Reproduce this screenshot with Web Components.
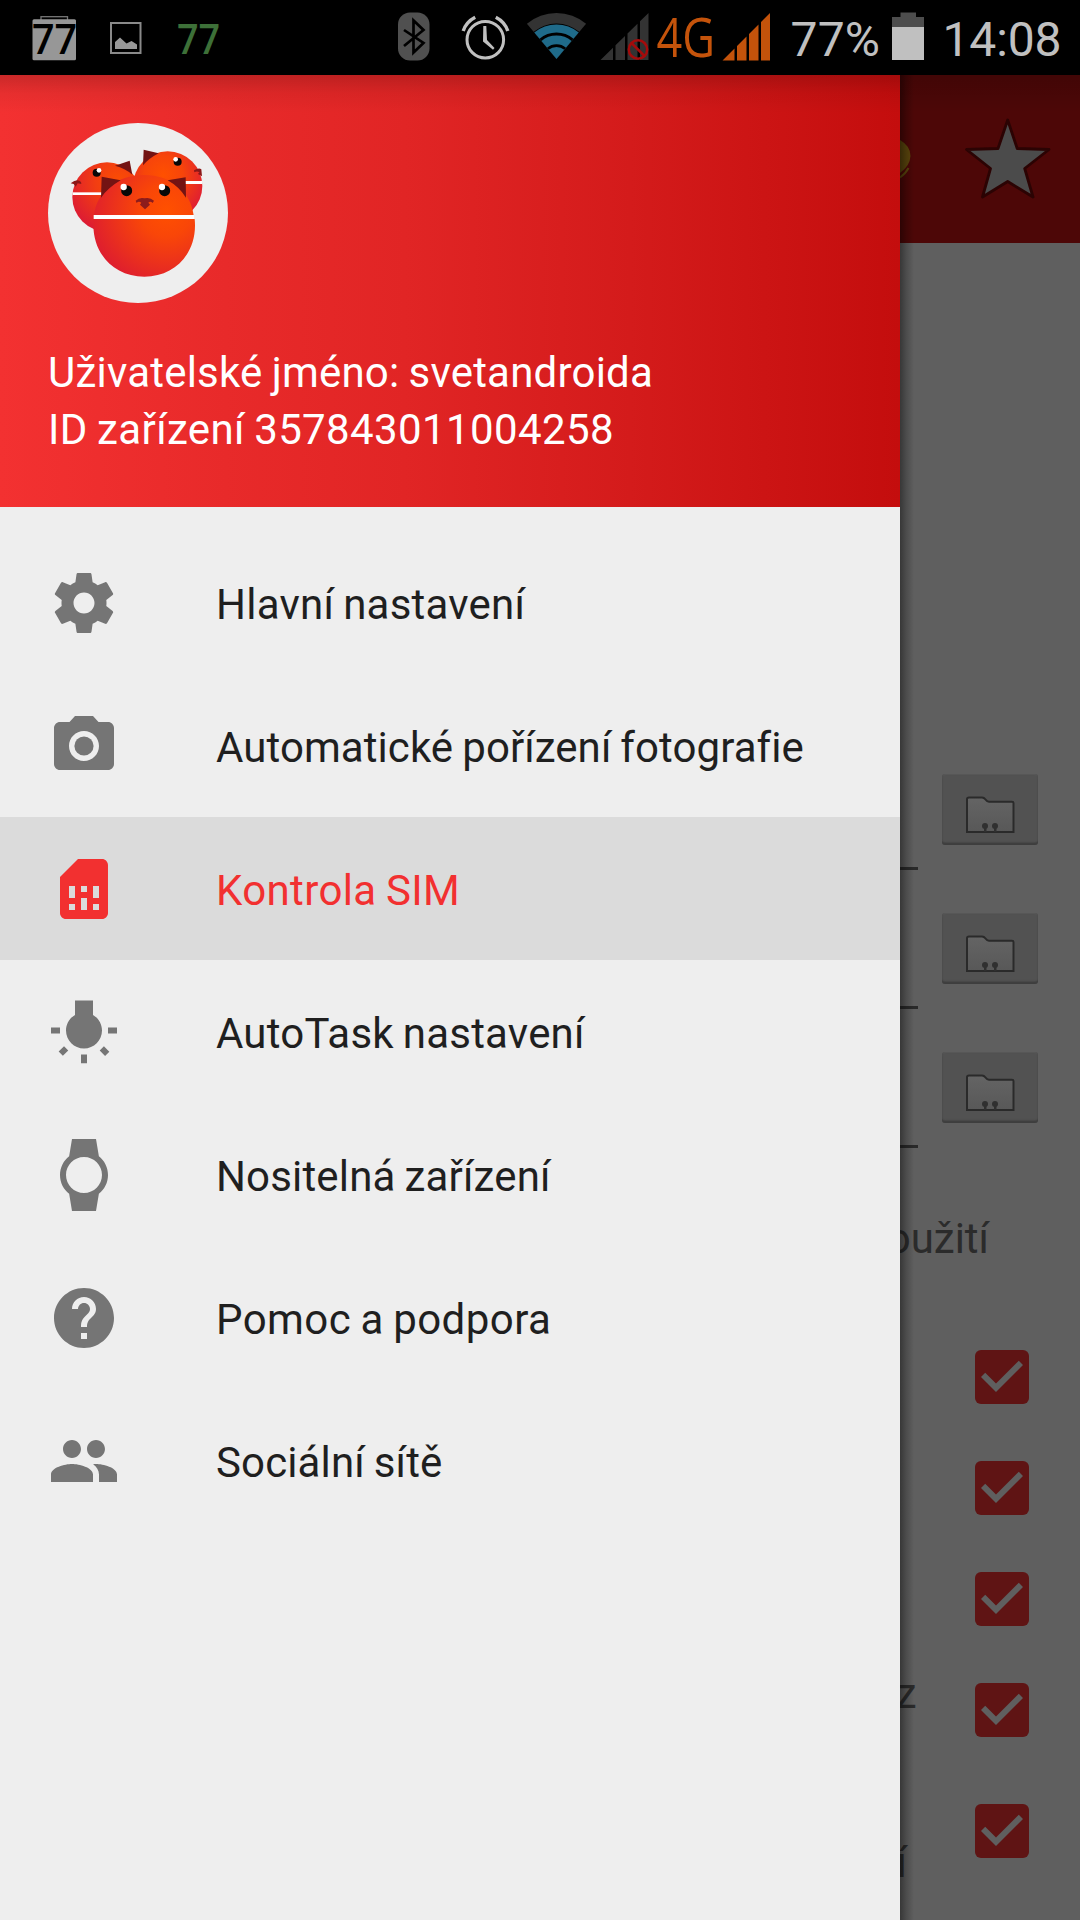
<!DOCTYPE html>
<html lang="cs">
<head>
<meta charset="utf-8">
<title>Kontrola SIM</title>
<style>
html,body{margin:0;background:#000;font-family:Roboto,"Noto Sans",sans-serif}
</style>
</head>
<body>
<app-screen></app-screen>
<script>
const define=(name,markup,after)=>customElements.define(name,class extends HTMLElement{
  constructor(){super();this.attachShadow({mode:'open'});}
  connectedCallback(){
    this.shadowRoot.innerHTML=typeof markup==='function'?markup(this):markup;
    if(after)after(this);
  }
});

/* Text whose last glyph ends at the given distance from its start. */
define('fit-text',`<style>:host{display:block;white-space:nowrap;word-spacing:-1.5px}</style><slot></slot>`,el=>{
  const cs=getComputedStyle(el),c=document.createElement('canvas').getContext('2d');
  c.font=`${cs.fontWeight} ${cs.fontSize} ${cs.fontFamily}`;
  const t=el.textContent,end=+el.getAttribute('end'),spaces=t.split(' ').length-1;
  const ink=c.measureText(t).actualBoundingBoxRight-spaces*1.5;
  el.style.letterSpacing=((end-ink)/(t.length-1)).toFixed(3)+'px';
});

const ICONS={
  settings:'<path d="M19.43 12.98c.04-.32.07-.64.07-.98s-.03-.66-.07-.98l2.11-1.65c.19-.15.24-.42.12-.64l-2-3.46c-.12-.22-.39-.3-.61-.22l-2.49 1c-.52-.4-1.08-.73-1.69-.98l-.38-2.65C14.46 2.18 14.25 2 14 2h-4c-.25 0-.46.18-.49.42l-.38 2.65c-.61.25-1.17.59-1.69.98l-2.49-1c-.23-.09-.49 0-.61.22l-2 3.46c-.13.22-.07.49.12.64l2.11 1.65c-.04.32-.07.65-.07.98s.03.66.07.98l-2.11 1.65c-.19.15-.24.42-.12.64l2 3.46c.12.22.39.3.61.22l2.49-1c.52.4 1.08.73 1.69.98l.38 2.65c.03.24.24.42.49.42h4c.25 0 .46-.18.49-.42l.38-2.65c.61-.25 1.17-.59 1.69-.98l2.49 1c.23.09.49 0 .61-.22l2-3.46c.12-.22.07-.49-.12-.64l-2.11-1.65zM12 15.5c-1.93 0-3.5-1.57-3.5-3.5s1.57-3.5 3.5-3.5 3.5 1.57 3.5 3.5-1.57 3.5-3.5 3.5z"/>',
  camera:'<circle cx="12" cy="12" r="3.2"/><path d="M9 2L7.17 4H4c-1.1 0-2 .9-2 2v12c0 1.1.9 2 2 2h16c1.1 0 2-.9 2-2V6c0-1.1-.9-2-2-2h-3.17L15 2H9zm3 15c-2.76 0-5-2.24-5-5s2.24-5 5-5 5 2.24 5 5-2.24 5-5 5z"/>',
  sim:'<path d="M19.99 4c0-1.1-.89-2-1.99-2h-8L4 8v12c0 1.1.9 2 2 2h12.01c1.1 0 1.99-.9 1.99-2l-.01-16zM9 19H7v-2h2v2zm8 0h-2v-2h2v2zm-8-4H7v-4h2v4zm4 4h-2v-4h2v4zm0-6h-2v-2h2v2zm4 2h-2v-4h2v4z"/>',
  bulb:'<path d="M3.55 18.54l1.41 1.41 1.79-1.8-1.41-1.41-1.79 1.8zM11 22.45h2V19.5h-2v2.95zM4 10.5H1v2h3v-2zm11-4.19V1.5H9v4.81C7.21 7.35 6 9.28 6 11.5c0 3.31 2.69 6 6 6s6-2.69 6-6c0-2.22-1.21-4.15-3-5.19zm5 4.19v2h3v-2h-3zm-2.76 7.66l1.79 1.8 1.41-1.41-1.8-1.79-1.4 1.4z"/>',
  watch:'<path d="M20 12c0-2.54-1.19-4.81-3.04-6.27L16 0H8l-.95 5.73C5.19 7.19 4 9.45 4 12s1.19 4.81 3.05 6.27L8 24h8l.96-5.73C18.81 16.81 20 14.54 20 12zM6 12c0-3.31 2.69-6 6-6s6 2.69 6 6-2.69 6-6 6-6-2.69-6-6z"/>',
  help:'<path d="M12 2C6.48 2 2 6.48 2 12s4.48 10 10 10 10-4.48 10-10S17.52 2 12 2zm1 17h-2v-2h2v2zm2.07-7.75l-.9.92C13.45 12.9 13 13.5 13 15h-2v-.5c0-1.1.45-2.1 1.17-2.83l1.24-1.26c.37-.36.59-.86.59-1.41 0-1.1-.9-2-2-2s-2 .9-2 2H8c0-2.21 1.79-4 4-4s4 1.79 4 4c0 .88-.36 1.68-.93 2.25z"/>',
  people:'<path d="M16 11c1.66 0 2.99-1.34 2.99-3S17.66 5 16 5s-3 1.34-3 3 1.34 3 3 3zm-8 0c1.66 0 2.99-1.34 2.99-3S9.66 5 8 5 5 6.34 5 8s1.34 3 3 3zm0 2c-2.33 0-7 1.17-7 3.5V19h14v-2.5c0-2.33-4.67-3.5-7-3.5zm8 0c-.29 0-.62.02-.97.05 1.16.84 1.97 1.97 1.97 3.45V19h6v-2.5c0-2.33-4.67-3.5-7-3.5z"/>'
};
define('menu-icon',el=>`<style>:host{display:block;width:72px;height:72px}svg{display:block;fill:currentColor}</style>
<svg width="72" height="72" viewBox="0 0 24 24">${ICONS[el.getAttribute('name')]}</svg>`);

define('menu-item',el=>`<style>
:host{display:flex;box-sizing:border-box;height:143px;padding:36px 48px 0;gap:96px;color:#757575}
:host([selected]){background:#dbdbdb;color:#f23030}
fit-text{color:#1f1f1f;font-size:42px;line-height:50px;margin-top:13px}
:host([selected]) fit-text{color:#f23030}
</style><menu-icon name="${el.getAttribute('icon')}"></menu-icon><fit-text end="${el.getAttribute('end')}">${el.getAttribute('label')}</fit-text>`);

define('status-bar',`<style>:host{display:block;height:75px;background:#000}svg{display:block}
text{font-family:Roboto,sans-serif}.w{font-size:48px;fill:#c0c0c0}.c{font-family:"Open Sans","Noto Sans",sans-serif}</style>
<svg width="1080" height="75" viewBox="0 0 1080 75">
<rect x="41" y="16.700" width="26.500" height="4" fill="none" stroke="#777" stroke-width="1.300"/>
<rect x="32.500" y="19.300" width="43.500" height="41" rx="1.500" fill="#979797"/>
<text class="c" x="32" y="53.500" font-size="41" font-weight="600" textLength="45" lengthAdjust="spacingAndGlyphs" fill="#000">77</text>
<rect x="111" y="23" width="29.500" height="30" fill="none" stroke="#8a8a8a" stroke-width="2"/>
<path d="M115 49V42L120 37.500L126.500 43.500L131.500 41L137 44.500V49Z" fill="#999"/>
<text class="c" x="177" y="53.500" font-size="41" font-weight="600" textLength="43" lengthAdjust="spacingAndGlyphs" fill="#3d7038">77</text>
<rect x="398" y="12.500" width="31.500" height="48" rx="12" fill="#505050"/>
<path d="M404 30L423.500 43L413.500 52.500V20.500L423.500 30L404 46" fill="none" stroke="#000" stroke-width="2.700"/>
<g fill="none" stroke="#c0c0c0" stroke-width="3"><circle cx="485.300" cy="39.700" r="18.300"/><path d="M463.200 31Q466 22 475.200 17.200M495.800 17.200Q505 22 507.800 31" stroke-width="3.400"/></g>
<path d="M483.300 26H486.300L487 40L494.500 48L493 49.700L483 41.500Z" fill="#c0c0c0"/>
<path d="M556.500 59L526.900 23.800A46 46 0 0 1 586.100 23.800Z" fill="#333"/><path d="M556.500 59L533.700 31.800A35.500 35.500 0 0 1 579.300 31.800Z" fill="#000"/>
<path d="M556.500 59L534.300 32.600A34.500 34.500 0 0 1 578.700 32.600Z" fill="#1f6b8a"/><path d="M539.500 38.800A26.400 26.400 0 0 1 573.500 38.800L571.600 41A23.500 23.500 0 0 0 541.400 41Z" fill="#000"/><path d="M547 47.700A14.800 14.800 0 0 1 566 47.700L564.300 49.800A12 12 0 0 0 548.700 49.800Z" fill="#000"/>
<path d="M600.500 60L613 47.800V60ZM615.500 60V45.300L625 36V60ZM627.500 60V33.600L637.500 23.800V60ZM640 60V21.300L648.500 13V60Z" fill="#333"/>
<g fill="none" stroke="#a50b0b" stroke-width="2.500"><circle cx="638" cy="49.500" r="9.200"/><path d="M631.500 43L644.500 56"/></g>
<text class="c" x="656.500" y="57" font-size="54" textLength="58.500" lengthAdjust="spacingAndGlyphs" fill="#c4530b">4G</text>
<path d="M722.500 60.500L734.500 48.500V60.500ZM737 60.500V46L746.500 36.500V60.500ZM749 60.500V34L758.500 24.500V60.500ZM761 60.500V22L770 13V60.500Z" fill="#c4530b"/>
<text class="w" x="790.500" y="56" textLength="89.500">77%</text>
<path d="M900.500 12.500H916V17H924V60H892V17H900.500Z" fill="#4d4d4d"/><path d="M892 27H924V60H892Z" fill="#c0c0c0"/>
<text class="w" x="942.500" y="56" textLength="119">14:08</text>
</svg>`);

define('cats-avatar',`<style>:host{display:block;width:180px;height:180px}svg{display:block}</style>
<svg width="180" height="180" viewBox="54 39 540 540"><defs>
<radialGradient id="g" gradientUnits="userSpaceOnUse" cx="410" cy="300" r="265"><stop offset="0" stop-color="#ff5000"/><stop offset=".3" stop-color="#f94608"/><stop offset="1" stop-color="#d91636"/></radialGradient>
<radialGradient id="l" gradientUnits="userSpaceOnUse" cx="262" cy="215" r="165"><stop offset="0" stop-color="#fb4e02"/><stop offset=".4" stop-color="#f23d12"/><stop offset="1" stop-color="#db1936"/></radialGradient>
<radialGradient id="r" gradientUnits="userSpaceOnUse" cx="400" cy="195" r="145"><stop offset="0" stop-color="#ff5000"/><stop offset=".4" stop-color="#f7450a"/><stop offset="1" stop-color="#dc1838"/></radialGradient></defs>
<circle cx="324" cy="309" r="270" fill="#eee"/>
<circle cx="413" cy="228" r="104" fill="url(#r)"/><path d="M440 213H516V222H440Z" fill="#fff"/>
<path d="M341 119L386 130Q358 144 339 166Z" fill="#731313"/><path d="M492 181Q507 172 514 178L516 199L504 192L508 187Q501 182 493 187Z" fill="#8c1717"/>
<circle cx="443" cy="155" r="12" fill="#080808"/><circle cx="437" cy="148" r="7" fill="#fff"/>
<circle cx="231" cy="261" r="104" fill="url(#l)"/><path d="M128 247H220V255H128Z" fill="#fff"/>
<path d="M255 167L299 152L307 194Q285 174 255 167Z" fill="#731313"/><path d="M122 220Q142 204 153 216L154 222L143 220L137 230L131 222Z" fill="#8c1717"/>
<circle cx="200" cy="188" r="12" fill="#080808"/><circle cx="207" cy="181" r="7" fill="#fff"/>
<path d="M192 316C201 245 259 195 342 195C425 195 482 245 491 316ZM191 327H494C504 425 438 500 343 500C248 500 182 425 191 327Z" fill="url(#g)"/>
<path d="M215 200L272 211Q235 232 213 263ZM467 202L413 211Q447 230 468 263Z" fill="#731313"/>
<path d="M191 315H492V327H191Z" fill="#fff"/>
<circle cx="290" cy="242" r="16.500" fill="#080808"/><circle cx="281" cy="231" r="9.500" fill="#fff"/>
<circle cx="404" cy="242" r="16.500" fill="#080808"/><circle cx="396" cy="231" r="9.500" fill="#fff"/>
<path d="M317 272Q328 261 344 265Q360 261 372 272L368 279Q361 272 355 278L360 284L345 298L330 284L334 278Q326 272 320 279Z" fill="#8c1c1c"/>
</svg>`);

define('drawer-header',`<style>:host{display:flex;flex-direction:column;box-sizing:border-box;height:432px;padding:48px 48px 0;color:#fff;font-size:42px;line-height:57px;
background:linear-gradient(rgba(0,0,0,.17),rgba(0,0,0,.05) 18px,transparent 38px),linear-gradient(90deg,#f33131,#e82a2a 25%,#e12525 45%,#d41b1b 70%,#c40d0d)}
.t{margin-top:41px}</style>
<cats-avatar></cats-avatar>
<div class="t"><fit-text end="603">Uživatelské jméno: svetandroida</fit-text><fit-text end="564">ID zařízení 357843011004258</fit-text></div>`);

define('nav-drawer',`<style>:host{display:block;width:900px;background:#eee}nav{padding-top:24px}</style>
<drawer-header></drawer-header>
<nav><menu-item icon="settings" label="Hlavní nastavení" end="310.5"></menu-item>
<menu-item icon="camera" label="Automatické pořízení fotografie" end="585"></menu-item>
<menu-item icon="sim" label="Kontrola SIM" end="241" selected></menu-item>
<menu-item icon="bulb" label="AutoTask nastavení" end="370"></menu-item>
<menu-item icon="watch" label="Nositelná zařízení" end="336"></menu-item>
<menu-item icon="help" label="Pomoc a podpora" end="333"></menu-item>
<menu-item icon="people" label="Sociální sítě" end="225"></menu-item></nav>`);

define('page-toolbar',`<style>:host{display:block;height:168px;background:linear-gradient(rgba(0,0,0,.15),transparent 38px),#4d0707}svg{display:block}</style>
<svg width="180" height="168" viewBox="900 75 180 168">
<path d="M900 140Q910.500 146 910.500 156Q910 166 900 173Z" fill="#5c460c"/><path d="M900 177.500Q906 173 908.500 168" fill="none" stroke="#5c460c" stroke-width="2"/>
<path d="M1007.700 120L1017.200 148.500L1049 149.500L1024.700 168.500L1033 197L1007.700 181.500L982.500 197L990.500 168.500L966.500 149.500L998 148.500Z" fill="#4b4b4b" stroke="#2b0303" stroke-width="2.800" stroke-linejoin="round"/>
</svg>`);

define('folder-row',`<style>:host{display:flex;height:96px;margin-bottom:43px;justify-content:space-between;padding-right:42px}
i{width:18px;height:3px;background:#2a2a2a;align-self:flex-end}
b{display:block;width:96px;height:71px;border-radius:3px;background:#525252;box-shadow:inset 0 -2.500px 1.500px #3e3e3e,inset 0 1px 1px #585858}svg{display:block}</style><i></i>
<b><svg width="96" height="71"><defs><linearGradient id="f" x2="0" y2="1"><stop stop-color="#646464"/><stop offset="1" stop-color="#585858"/></linearGradient></defs>
<path d="M25 58V25Q25 23.500 27 23.500H40Q42 23.500 43.500 25.500Q45 27.700 47 27.700H70Q71.500 27.700 71.500 29V58Z" fill="url(#f)" stroke="#2a2a2a" stroke-width="2"/>
<g fill="#303030"><circle cx="43" cy="52" r="3"/><circle cx="53" cy="52" r="3"/><path d="M42 52H44.500V58H42ZM52 52H54.500V58H52Z"/></g></svg></b>`);

define('check-row',`<style>:host{display:block;height:54px;padding-left:75px}svg{display:block}</style>
<svg width="54" height="54"><rect width="54" height="54" rx="6" fill="#5f1414"/><path d="M21 42L6 27L10.230 22.770L21 33.510L43.770 10.740L48 15Z" fill="#5f5f5f"/></svg>`);

define('page-content',`<style>:host{display:block;width:180px;background:#5f5f5f;color:#2b2b2b;font-size:42px;line-height:50px}
section{padding-top:531px}p{margin:0;height:50px;display:flex;justify-content:flex-end;white-space:nowrap}</style>
<page-toolbar></page-toolbar>
<section><folder-row></folder-row><folder-row></folder-row><folder-row></folder-row></section>
<p style="margin-top:66px;padding-right:91px">oužití</p>
<check-row style="margin-top:86px"></check-row>
<check-row style="margin-top:57px"></check-row>
<check-row style="margin-top:57px"></check-row>
<p style="margin-top:43px;margin-bottom:-36px;padding-right:163.500px">z</p>
<check-row></check-row>
<p style="margin-top:101px;margin-bottom:-84px;padding-right:173px">í</p>
<check-row></check-row>`);

define('drawer-shadow',`<style>:host{display:block;width:14px;background:linear-gradient(90deg,rgba(0,0,0,.42),rgba(0,0,0,.2) 45%,transparent)}</style>`);

define('app-screen',`<style>:host{display:flex;flex-direction:column;width:1080px;height:1920px;overflow:hidden}
main{flex:1;min-height:0;display:grid;grid-template-columns:900px 14px 166px;grid-template-rows:100%}
nav-drawer{grid-area:1/1;z-index:2}page-content{grid-area:1/2/2/4}drawer-shadow{grid-area:1/2;z-index:1}</style>
<status-bar></status-bar><main><nav-drawer></nav-drawer><page-content></page-content><drawer-shadow></drawer-shadow></main>`);
</script>
</body>
</html>
